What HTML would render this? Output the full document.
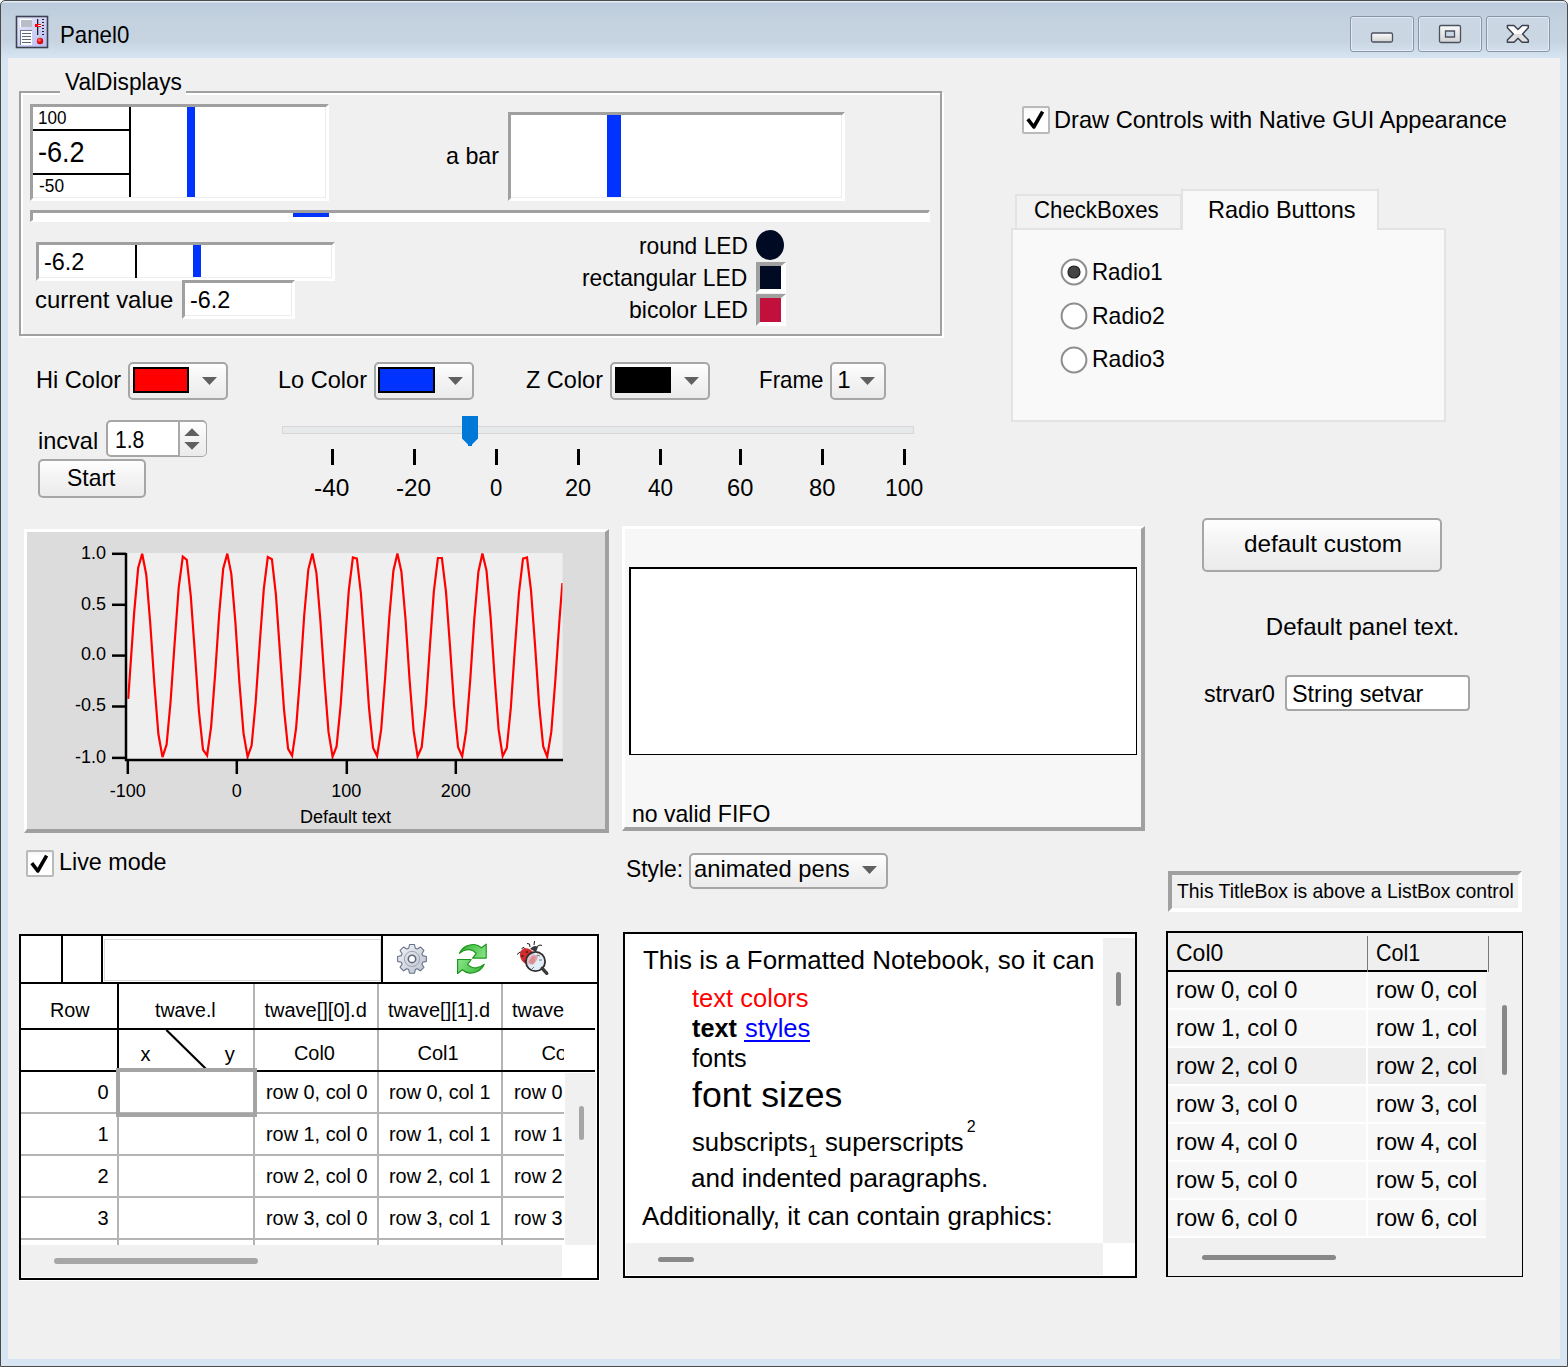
<!DOCTYPE html>
<html><head><meta charset="utf-8"><style>
html,body{margin:0;padding:0;width:1568px;height:1367px;overflow:hidden;background:#fff;}
body{position:relative;font-family:"Liberation Sans",sans-serif;}
.t{position:absolute;white-space:nowrap;}
</style></head><body>
<div style="position:absolute;left:0;top:0;width:1568px;height:1367px;box-sizing:border-box;border:1px solid #4a4a4a;border-radius:5px 5px 0 0;background:linear-gradient(#e4ecf5 0px,#e4ecf5 1px,#bccbdb 2px,#c4d2df 20px,#c6d4e1 40px,#d6e3f1 56px,#d8e5f3 70px,#d8e5f3 100%);"></div>
<div style="position:absolute;left:8px;top:58px;width:1552px;height:1301px;background:#f0f0f0;"></div>
<svg style="position:absolute;left:15px;top:15px" width="35" height="35" viewBox="15 15 35 35">
<defs><linearGradient id="ig" x1="0" y1="0" x2="1" y2="1"><stop offset="0" stop-color="#e8e8fc"/><stop offset="1" stop-color="#b8bdf0"/></linearGradient>
<radialGradient id="rb" cx="0.4" cy="0.35" r="0.7"><stop offset="0" stop-color="#ff8080"/><stop offset="0.5" stop-color="#f01010"/><stop offset="1" stop-color="#c00000"/></radialGradient></defs>
<rect x="16.5" y="16.5" width="31" height="31" fill="url(#ig)" stroke="#3c4250" stroke-width="1.6"/>
<rect x="20" y="19" width="12" height="8" fill="#fff"/><rect x="21" y="20" width="11" height="7" fill="#b8bec8"/>
<rect x="20" y="30" width="12" height="15" fill="#fff"/><rect x="20" y="30" width="1" height="15" fill="#6a7888"/><rect x="20" y="30" width="12" height="1" fill="#6a7888"/>
<g fill="#5a6878"><rect x="22" y="33" width="9" height="1"/><rect x="22" y="36" width="9" height="1"/><rect x="22" y="39" width="9" height="1"/><rect x="22" y="42" width="9" height="1"/></g>
<rect x="37" y="19" width="1.3" height="16" fill="#202428"/>
<rect x="35" y="24" width="6" height="3" fill="#ff0000"/><rect x="38" y="25" width="3" height="1" fill="#fff"/>
<g fill="#202428"><rect x="42" y="19" width="2" height="1"/><rect x="42" y="22" width="2" height="1"/><rect x="42" y="25" width="2" height="1"/><rect x="42" y="28" width="2" height="1"/><rect x="42" y="31" width="2" height="1"/><rect x="42" y="34" width="2" height="1"/></g>
<circle cx="40" cy="41" r="3.2" fill="url(#rb)"/>
</svg>
<div class="t" style="left:60.07px;top:22.70px;font-size:24px;line-height:24px;color:#000;font-weight:normal;font-family:'Liberation Sans';transform:scaleX(0.9266);transform-origin:0 0;">Panel0</div>
<div style="position:absolute;left:1350px;top:16px;width:64px;height:35.5px;box-sizing:border-box;border:1px solid #8894aa;border-radius:3px;box-shadow:inset 0 0 0 1px rgba(255,255,255,0.45);background:linear-gradient(rgba(255,255,255,0.12),rgba(255,255,255,0.05));"></div>
<div style="position:absolute;left:1418px;top:16px;width:64px;height:35.5px;box-sizing:border-box;border:1px solid #8894aa;border-radius:3px;box-shadow:inset 0 0 0 1px rgba(255,255,255,0.45);background:linear-gradient(rgba(255,255,255,0.12),rgba(255,255,255,0.05));"></div>
<div style="position:absolute;left:1486px;top:16px;width:64px;height:35.5px;box-sizing:border-box;border:1px solid #8894aa;border-radius:3px;box-shadow:inset 0 0 0 1px rgba(255,255,255,0.45);background:linear-gradient(rgba(255,255,255,0.12),rgba(255,255,255,0.05));"></div>
<svg style="position:absolute;left:1360px;top:20px" width="190" height="30" viewBox="1360 20 190 30">
<defs><linearGradient id="cg" x1="0" y1="0" x2="0" y2="1"><stop offset="0" stop-color="#fbfbfb"/><stop offset="1" stop-color="#d2d2d2"/></linearGradient><linearGradient id="cg2" x1="0" y1="0" x2="0" y2="1"><stop offset="0" stop-color="#fff"/><stop offset="0.5" stop-color="#fcfcfc"/><stop offset="0.5" stop-color="#dcdcdc"/><stop offset="1" stop-color="#e4e4e4"/></linearGradient></defs>
<rect x="1371.5" y="33" width="21" height="9" rx="1.5" fill="url(#cg)" stroke="#4a5060" stroke-width="1.3"/>
<path fill-rule="evenodd" d="M1441,25.5 h18 a1.5,1.5 0 0 1 1.5,1.5 v14 a1.5,1.5 0 0 1 -1.5,1.5 h-18 a1.5,1.5 0 0 1 -1.5,-1.5 v-14 a1.5,1.5 0 0 1 1.5,-1.5 z M1445.5,31 v6 h9 v-6 z" fill="url(#cg)" stroke="#4a5060" stroke-width="1.3"/>
<path d="M1507.4,25.5 H1514 L1518,29.5 L1522.1,25.5 H1528.3 V27.8 L1522.6,34 L1528.3,40 V42.3 H1522.1 L1518,38.3 L1514,42.3 H1507.4 V40 L1513.3,34 L1507.4,27.8 Z" fill="url(#cg2)" stroke="#3c4250" stroke-width="1.5" stroke-linejoin="round"/>
</svg>
<div style="position:absolute;left:21px;top:93px;width:923px;height:245px;box-sizing:border-box;border:2px solid #fff;"></div>
<div style="position:absolute;left:19px;top:91px;width:923px;height:245px;box-sizing:border-box;border:2px solid #a0a0a0;"></div>
<div style="position:absolute;left:60px;top:78px;width:126px;height:18px;background:#f0f0f0;"></div>
<div class="t" style="left:64.50px;top:70.54px;font-size:23px;line-height:23px;color:#000;font-weight:normal;font-family:'Liberation Sans';transform:scaleX(0.9869);transform-origin:0 0;">ValDisplays</div>
<div style="position:absolute;left:30px;top:104px;width:299px;height:97px;box-sizing:border-box;background:#fff;border-style:solid;border-width:3px;border-color:#a0a0a0 #fff #fff #a0a0a0;box-shadow:inset -1px -1px 0 #ededed;"></div>
<div style="position:absolute;left:129px;top:107px;width:2px;height:90px;background:#000;"></div>
<div style="position:absolute;left:33px;top:129px;width:97px;height:2px;background:#000;"></div>
<div style="position:absolute;left:33px;top:173px;width:97px;height:2px;background:#000;"></div>
<div style="position:absolute;left:187px;top:107px;width:8px;height:90px;background:#0033ff;"></div>
<div class="t" style="left:38.25px;top:108.77px;font-size:18px;line-height:18px;color:#000;font-weight:normal;font-family:'Liberation Sans';transform:scaleX(0.9476);transform-origin:0 0;">100</div>
<div class="t" style="left:38.27px;top:137.67px;font-size:29px;line-height:29px;color:#000;font-weight:normal;font-family:'Liberation Sans';transform:scaleX(0.9343);transform-origin:0 0;">-6.2</div>
<div class="t" style="left:39.20px;top:176.87px;font-size:18px;line-height:18px;color:#000;font-weight:normal;font-family:'Liberation Sans';transform:scaleX(0.9614);transform-origin:0 0;">-50</div>
<div style="position:absolute;left:30px;top:210px;width:900px;height:12px;box-sizing:border-box;background:#fff;border-style:solid;border-width:3px 2px 2px 3px;border-color:#a0a0a0 #fff #fff #a0a0a0;"></div>
<div style="position:absolute;left:293px;top:213px;width:36px;height:4px;background:#0033ff;"></div>
<div class="t" style="left:445.63px;top:144.30px;font-size:24px;line-height:24px;color:#000;font-weight:normal;font-family:'Liberation Sans';transform:scaleX(0.9700);transform-origin:0 0;">a bar</div>
<div style="position:absolute;left:508px;top:112px;width:337px;height:89px;box-sizing:border-box;background:#fff;border-style:solid;border-width:3px;border-color:#a0a0a0 #fff #fff #a0a0a0;box-shadow:inset -1px -1px 0 #ededed;"></div>
<div style="position:absolute;left:607px;top:115px;width:14px;height:82px;background:#0033ff;"></div>
<div class="t" style="left:638.65px;top:234.10px;font-size:24px;line-height:24px;color:#000;font-weight:normal;font-family:'Liberation Sans';transform:scaleX(0.9497);transform-origin:0 0;">round LED</div>
<div class="t" style="left:582.35px;top:266.20px;font-size:24px;line-height:24px;color:#000;font-weight:normal;font-family:'Liberation Sans';transform:scaleX(0.9530);transform-origin:0 0;">rectangular LED</div>
<div class="t" style="left:628.64px;top:297.60px;font-size:24px;line-height:24px;color:#000;font-weight:normal;font-family:'Liberation Sans';transform:scaleX(0.9591);transform-origin:0 0;">bicolor LED</div>
<div style="position:absolute;left:756px;top:230px;width:28px;height:30px;border-radius:50%;background:#000a22;"></div>
<div style="position:absolute;left:756px;top:262px;width:30px;height:31px;box-sizing:border-box;background:#000a22;border-style:solid;border-width:4px 5px 4px 4px;border-color:#a0a0a0 #fff #fff #a0a0a0;"></div>
<div style="position:absolute;left:756px;top:294px;width:30px;height:32px;box-sizing:border-box;background:#c2103c;border-style:solid;border-width:4px 5px 4px 4px;border-color:#a0a0a0 #fff #fff #a0a0a0;"></div>
<div style="position:absolute;left:36px;top:242px;width:299px;height:39px;box-sizing:border-box;background:#fff;border-style:solid;border-width:3px;border-color:#a0a0a0 #fff #fff #a0a0a0;box-shadow:inset -1px -1px 0 #ededed;"></div>
<div style="position:absolute;left:135px;top:245px;width:2px;height:33px;background:#000;"></div>
<div style="position:absolute;left:193px;top:245px;width:8px;height:32px;background:#0033ff;"></div>
<div class="t" style="left:43.92px;top:249.60px;font-size:24px;line-height:24px;color:#000;font-weight:normal;font-family:'Liberation Sans';transform:scaleX(0.9773);transform-origin:0 0;">-6.2</div>
<div class="t" style="left:35.40px;top:287.60px;font-size:24px;line-height:24px;color:#000;font-weight:normal;font-family:'Liberation Sans';transform:scaleX(0.9972);transform-origin:0 0;">current value</div>
<div style="position:absolute;left:182px;top:280px;width:113px;height:39px;box-sizing:border-box;background:#fff;border-style:solid;border-width:3px;border-color:#a0a0a0 #fff #fff #a0a0a0;box-shadow:inset -1px -1px 0 #ededed;"></div>
<div class="t" style="left:190.43px;top:287.60px;font-size:24px;line-height:24px;color:#000;font-weight:normal;font-family:'Liberation Sans';transform:scaleX(0.9723);transform-origin:0 0;">-6.2</div>
<div style="position:absolute;left:1022px;top:106px;width:27.5px;height:27.5px;box-sizing:border-box;border:2px solid #bababa;border-radius:2px;background:linear-gradient(#f4f4f4,#fff 4px);"></div><svg style="position:absolute;left:1022px;top:106px" width="28" height="28" viewBox="0 0 28 28"><path d="M5.8,13.2 L11.8,21 L20.6,5.6" fill="none" stroke="#000" stroke-width="3.6" stroke-linejoin="round"/></svg>
<div class="t" style="left:1053.72px;top:107.70px;font-size:24px;line-height:24px;color:#000;font-weight:normal;font-family:'Liberation Sans';transform:scaleX(0.9840);transform-origin:0 0;">Draw Controls with Native GUI Appearance</div>
<div style="position:absolute;left:1015px;top:194px;width:167px;height:36px;box-sizing:border-box;border:2px solid #e3e3e3;border-bottom:none;background:#f2f2f2;"></div>
<div style="position:absolute;left:1011px;top:228px;width:435px;height:194px;box-sizing:border-box;border:2px solid #e3e3e3;background:#f9f9f9;"></div>
<div style="position:absolute;left:1181px;top:189px;width:198px;height:41px;box-sizing:border-box;border:2px solid #e3e3e3;border-bottom:none;background:#f9f9f9;"></div>
<div class="t" style="left:1034.08px;top:197.60px;font-size:24px;line-height:24px;color:#000;font-weight:normal;font-family:'Liberation Sans';transform:scaleX(0.9250);transform-origin:0 0;">CheckBoxes</div>
<div class="t" style="left:1208.02px;top:197.60px;font-size:24px;line-height:24px;color:#000;font-weight:normal;font-family:'Liberation Sans';transform:scaleX(0.9789);transform-origin:0 0;">Radio Buttons</div>
<svg style="position:absolute;left:1059px;top:257px" width="30" height="30" viewBox="0 0 30 30"><circle cx="15" cy="15" r="12.4" fill="#fff" stroke="#8e8e8e" stroke-width="2"/><circle cx="15" cy="15" r="6" fill="#454545" stroke="#202020" stroke-width="1.2"/></svg>
<svg style="position:absolute;left:1059px;top:301px" width="30" height="30" viewBox="0 0 30 30"><circle cx="15" cy="15" r="12.4" fill="#fff" stroke="#8e8e8e" stroke-width="2"/></svg>
<svg style="position:absolute;left:1059px;top:345px" width="30" height="30" viewBox="0 0 30 30"><circle cx="15" cy="15" r="12.4" fill="#fff" stroke="#8e8e8e" stroke-width="2"/></svg>
<div class="t" style="left:1092.07px;top:259.80px;font-size:24px;line-height:24px;color:#000;font-weight:normal;font-family:'Liberation Sans';transform:scaleX(0.9303);transform-origin:0 0;">Radio1</div>
<div class="t" style="left:1092.34px;top:304.00px;font-size:24px;line-height:24px;color:#000;font-weight:normal;font-family:'Liberation Sans';transform:scaleX(0.9584);transform-origin:0 0;">Radio2</div>
<div class="t" style="left:1092.34px;top:347.40px;font-size:24px;line-height:24px;color:#000;font-weight:normal;font-family:'Liberation Sans';transform:scaleX(0.9584);transform-origin:0 0;">Radio3</div>
<div class="t" style="left:36.02px;top:367.70px;font-size:24px;line-height:24px;color:#000;font-weight:normal;font-family:'Liberation Sans';transform:scaleX(0.9826);transform-origin:0 0;">Hi Color</div>
<div style="position:absolute;left:128px;top:362px;width:100px;height:38px;box-sizing:border-box;border:2px solid #a6a6a6;border-radius:5px;background:linear-gradient(#fefefe,#f3f3f3 50%,#ebebeb);"></div>
<div style="position:absolute;left:133px;top:367px;width:56px;height:26px;box-sizing:border-box;border:2px solid #000;background:#ff0000;"></div>
<svg style="position:absolute;left:201.5px;top:377.0px" width="15" height="8" viewBox="0 0 15 8"><path d="M0,0 H15 L7.5,8 Z" fill="#606060"/></svg>
<div class="t" style="left:278.02px;top:367.70px;font-size:24px;line-height:24px;color:#000;font-weight:normal;font-family:'Liberation Sans';transform:scaleX(0.9808);transform-origin:0 0;">Lo Color</div>
<div style="position:absolute;left:374px;top:362px;width:100px;height:38px;box-sizing:border-box;border:2px solid #a6a6a6;border-radius:5px;background:linear-gradient(#fefefe,#f3f3f3 50%,#ebebeb);"></div>
<div style="position:absolute;left:378px;top:367px;width:57px;height:26px;box-sizing:border-box;border:2px solid #000;background:#0033ff;"></div>
<svg style="position:absolute;left:447.5px;top:377.0px" width="15" height="8" viewBox="0 0 15 8"><path d="M0,0 H15 L7.5,8 Z" fill="#606060"/></svg>
<div class="t" style="left:525.50px;top:367.70px;font-size:24px;line-height:24px;color:#000;font-weight:normal;font-family:'Liberation Sans';transform:scaleX(0.9786);transform-origin:0 0;">Z Color</div>
<div style="position:absolute;left:610px;top:362px;width:100px;height:38px;box-sizing:border-box;border:2px solid #a6a6a6;border-radius:5px;background:linear-gradient(#fefefe,#f3f3f3 50%,#ebebeb);"></div>
<div style="position:absolute;left:615px;top:367px;width:56px;height:26px;background:#000;"></div>
<svg style="position:absolute;left:683.5px;top:377.0px" width="15" height="8" viewBox="0 0 15 8"><path d="M0,0 H15 L7.5,8 Z" fill="#606060"/></svg>
<div class="t" style="left:758.77px;top:367.70px;font-size:24px;line-height:24px;color:#000;font-weight:normal;font-family:'Liberation Sans';transform:scaleX(0.9295);transform-origin:0 0;">Frame</div>
<div style="position:absolute;left:830px;top:362px;width:56px;height:38px;box-sizing:border-box;border:2px solid #a6a6a6;border-radius:5px;background:linear-gradient(#fefefe,#f3f3f3 50%,#ebebeb);"></div>
<div class="t" style="left:837.20px;top:367.70px;font-size:24px;line-height:24px;color:#000;font-weight:normal;font-family:'Liberation Sans';">1</div>
<svg style="position:absolute;left:859.5px;top:377.0px" width="15" height="8" viewBox="0 0 15 8"><path d="M0,0 H15 L7.5,8 Z" fill="#606060"/></svg>
<div style="position:absolute;left:106px;top:420px;width:101px;height:37px;box-sizing:border-box;border:2px solid #a6a6a6;border-radius:5px;background:#fff;overflow:hidden;"></div>
<div style="position:absolute;left:179px;top:421.5px;width:26.5px;height:34px;background:linear-gradient(#fefefe,#f3f3f3 50%,#ebebeb);border-radius:0 4px 4px 0;"></div>
<div style="position:absolute;left:177.5px;top:421px;width:2px;height:35px;background:#a9a9a9;"></div>
<svg style="position:absolute;left:184px;top:428px" width="16" height="22" viewBox="0 0 16 22"><path d="M0.3,8 H15.7 L8,0.2 Z M0.3,14 H15.7 L8,21.8 Z" fill="#606060"/></svg>
<div class="t" style="left:38.02px;top:428.50px;font-size:24px;line-height:24px;color:#000;font-weight:normal;font-family:'Liberation Sans';transform:scaleX(0.9809);transform-origin:0 0;">incval</div>
<div class="t" style="left:115.02px;top:427.50px;font-size:24px;line-height:24px;color:#000;font-weight:normal;font-family:'Liberation Sans';transform:scaleX(0.8777);transform-origin:0 0;">1.8</div>
<div style="position:absolute;left:38px;top:458.5px;width:108px;height:39px;box-sizing:border-box;border:2px solid #a6a6a6;border-radius:5px;background:linear-gradient(#fefefe,#f3f3f3 50%,#ebebeb);"></div>
<div class="t" style="left:67.44px;top:465.70px;font-size:24px;line-height:24px;color:#000;font-weight:normal;font-family:'Liberation Sans';transform:scaleX(0.9557);transform-origin:0 0;">Start</div>
<div style="position:absolute;left:282px;top:426px;width:632px;height:8px;box-sizing:border-box;border:1.5px solid #d6d6d6;background:#e7eaea;"></div>
<svg style="position:absolute;left:461px;top:415px" width="18" height="32" viewBox="461 415 18 32"><path d="M462,416 H478 V438.5 L472,444.5 V446 H468 V444.5 L462,438.5 Z" fill="#0078d7"/></svg>
<div style="position:absolute;left:330.5px;top:449px;width:3px;height:16px;background:#000;"></div>
<div class="t" style="left:313.98px;top:476.30px;font-size:24px;line-height:24px;color:#000;font-weight:normal;font-family:'Liberation Sans';transform:scaleX(1.0198);transform-origin:0 0;">-40</div>
<div style="position:absolute;left:412.5px;top:449px;width:3px;height:16px;background:#000;"></div>
<div class="t" style="left:396.14px;top:476.30px;font-size:24px;line-height:24px;color:#000;font-weight:normal;font-family:'Liberation Sans';transform:scaleX(1.0108);transform-origin:0 0;">-20</div>
<div style="position:absolute;left:494.5px;top:449px;width:3px;height:16px;background:#000;"></div>
<div class="t" style="left:490.00px;top:476.30px;font-size:24px;line-height:24px;color:#000;font-weight:normal;font-family:'Liberation Sans';transform:scaleX(0.9231);transform-origin:0 0;">0</div>
<div style="position:absolute;left:576.5px;top:449px;width:3px;height:16px;background:#000;"></div>
<div class="t" style="left:564.62px;top:476.30px;font-size:24px;line-height:24px;color:#000;font-weight:normal;font-family:'Liberation Sans';transform:scaleX(0.9784);transform-origin:0 0;">20</div>
<div style="position:absolute;left:658.5px;top:449px;width:3px;height:16px;background:#000;"></div>
<div class="t" style="left:647.65px;top:476.30px;font-size:24px;line-height:24px;color:#000;font-weight:normal;font-family:'Liberation Sans';transform:scaleX(0.9375);transform-origin:0 0;">40</div>
<div style="position:absolute;left:738.5px;top:449px;width:3px;height:16px;background:#000;"></div>
<div class="t" style="left:726.51px;top:476.30px;font-size:24px;line-height:24px;color:#000;font-weight:normal;font-family:'Liberation Sans';transform:scaleX(0.9863);transform-origin:0 0;">60</div>
<div style="position:absolute;left:820.5px;top:449px;width:3px;height:16px;background:#000;"></div>
<div class="t" style="left:808.51px;top:476.30px;font-size:24px;line-height:24px;color:#000;font-weight:normal;font-family:'Liberation Sans';transform:scaleX(0.9863);transform-origin:0 0;">80</div>
<div style="position:absolute;left:902.5px;top:449px;width:3px;height:16px;background:#000;"></div>
<div class="t" style="left:884.54px;top:476.30px;font-size:24px;line-height:24px;color:#000;font-weight:normal;font-family:'Liberation Sans';transform:scaleX(0.9562);transform-origin:0 0;">100</div>
<div style="position:absolute;left:24px;top:529px;width:585px;height:304px;box-sizing:border-box;background:#dcdcdc;border-style:solid;border-width:3px 4px 4px 3px;border-color:#fff #a0a0a0 #a0a0a0 #fff;"></div>
<svg style="position:absolute;left:0;top:0" width="1568" height="1367" viewBox="0 0 1568 1367"><rect x="126" y="553" width="436.5" height="207" fill="#efefef"/><defs><clipPath id="pc"><rect x="127.3" y="540" width="435.2" height="222"/></clipPath></defs><polyline clip-path="url(#pc)" points="128.2,698.8 130.1,671.5 134.2,612.1 138.2,567.7 142.2,553.7 146.3,575.0 150.3,624.2 154.4,684.2 158.4,734.3 162.5,757.1 166.6,744.6 170.6,701.3 174.7,642.1 178.7,587.5 182.8,556.5 186.8,559.8 190.8,596.3 194.9,653.2 198.9,711.0 203.0,749.5 207.1,755.5 211.1,726.8 215.2,673.4 219.2,613.8 223.2,568.6 227.3,553.6 231.3,573.9 235.4,622.4 239.4,682.5 243.5,733.1 247.6,756.9 251.6,745.5 255.6,703.0 259.7,644.0 263.8,588.9 267.8,557.0 271.9,559.2 275.9,594.7 279.9,651.4 284.0,709.4 288.1,748.8 292.1,755.8 296.1,728.1 300.2,675.2 304.2,615.5 308.3,569.6 312.4,553.5 316.4,572.8 320.4,620.7 324.5,680.6 328.5,731.9 332.6,756.7 336.6,746.4 340.7,704.6 344.8,645.8 348.8,590.4 352.9,557.5 356.9,558.6 360.9,593.3 365.0,649.5 369.0,707.8 373.1,748.0 377.1,756.1 381.2,729.4 385.2,677.0 389.3,617.2 393.4,570.7 397.4,553.5 401.4,571.7 405.5,618.9 409.5,678.8 413.6,730.7 417.6,756.4 421.7,747.2 425.8,706.2 429.8,647.7 433.8,591.8 437.9,558.0 441.9,558.0 446.0,591.8 450.1,647.6 454.1,706.2 458.1,747.2 462.2,756.4 466.2,730.7 470.3,678.9 474.3,618.9 478.4,571.7 482.4,553.5 486.5,570.6 490.6,617.2 494.6,677.0 498.6,729.4 502.7,756.1 506.8,748.0 510.8,707.9 514.8,649.5 518.9,593.3 523.0,558.6 527.0,557.5 531.0,590.3 535.1,645.8 539.1,704.6 543.2,746.4 547.2,756.7 551.3,731.9 555.3,680.7 559.4,620.7 562.4,583.0" fill="none" stroke="#ff0000" stroke-width="2.2" stroke-linejoin="miter"/><path d="M126,553 V761 M125,760 H563" stroke="#000" stroke-width="2.5" fill="none"/><path d="M112,553.8 H126" stroke="#000" stroke-width="2.5"/><path d="M112,604.8 H126" stroke="#000" stroke-width="2.5"/><path d="M112,655.6 H126" stroke="#000" stroke-width="2.5"/><path d="M112,706.5 H126" stroke="#000" stroke-width="2.5"/><path d="M112,757.9 H126" stroke="#000" stroke-width="2.5"/><path d="M127.8,760 V774" stroke="#000" stroke-width="2.5"/><path d="M236.8,760 V774" stroke="#000" stroke-width="2.5"/><path d="M346.8,760 V774" stroke="#000" stroke-width="2.5"/><path d="M455.8,760 V774" stroke="#000" stroke-width="2.5"/></svg>
<div class="t" style="left:80.99px;top:543.57px;font-size:18px;line-height:18px;color:#000;font-weight:normal;font-family:'Liberation Sans';">1.0</div>
<div class="t" style="left:80.99px;top:594.57px;font-size:18px;line-height:18px;color:#000;font-weight:normal;font-family:'Liberation Sans';">0.5</div>
<div class="t" style="left:80.99px;top:645.37px;font-size:18px;line-height:18px;color:#000;font-weight:normal;font-family:'Liberation Sans';">0.0</div>
<div class="t" style="left:74.99px;top:696.27px;font-size:18px;line-height:18px;color:#000;font-weight:normal;font-family:'Liberation Sans';">-0.5</div>
<div class="t" style="left:74.99px;top:747.67px;font-size:18px;line-height:18px;color:#000;font-weight:normal;font-family:'Liberation Sans';">-1.0</div>
<div class="t" style="left:109.79px;top:781.57px;font-size:18px;line-height:18px;color:#000;font-weight:normal;font-family:'Liberation Sans';">-100</div>
<div class="t" style="left:231.80px;top:781.57px;font-size:18px;line-height:18px;color:#000;font-weight:normal;font-family:'Liberation Sans';">0</div>
<div class="t" style="left:331.29px;top:781.57px;font-size:18px;line-height:18px;color:#000;font-weight:normal;font-family:'Liberation Sans';">100</div>
<div class="t" style="left:440.79px;top:781.57px;font-size:18px;line-height:18px;color:#000;font-weight:normal;font-family:'Liberation Sans';">200</div>
<div class="t" style="left:300.00px;top:807.77px;font-size:18px;line-height:18px;color:#000;font-weight:normal;font-family:'Liberation Sans';">Default text</div>
<div style="position:absolute;left:622px;top:526px;width:523px;height:305px;box-sizing:border-box;background:#f7f7f7;border-style:solid;border-width:3px 4px 4px 3px;border-color:#fff #a0a0a0 #a0a0a0 #fff;"></div>
<div style="position:absolute;left:629px;top:567px;width:508px;height:188px;box-sizing:border-box;border-style:solid;border-color:#000;border-width:2px 1.3px 1.3px 2px;background:#fff;"></div>
<div class="t" style="left:631.94px;top:801.50px;font-size:24px;line-height:24px;color:#000;font-weight:normal;font-family:'Liberation Sans';transform:scaleX(0.9601);transform-origin:0 0;">no valid FIFO</div>
<div class="t" style="left:625.85px;top:857.00px;font-size:24px;line-height:24px;color:#000;font-weight:normal;font-family:'Liberation Sans';transform:scaleX(0.9520);transform-origin:0 0;">Style:</div>
<div style="position:absolute;left:688.5px;top:852.5px;width:199px;height:36px;box-sizing:border-box;border:2px solid #a6a6a6;border-radius:5px;background:linear-gradient(#fefefe,#f3f3f3 50%,#ebebeb);"></div>
<div class="t" style="left:693.61px;top:857.00px;font-size:24px;line-height:24px;color:#000;font-weight:normal;font-family:'Liberation Sans';transform:scaleX(0.9889);transform-origin:0 0;">animated pens</div>
<svg style="position:absolute;left:861.5px;top:866.0px" width="15" height="8" viewBox="0 0 15 8"><path d="M0,0 H15 L7.5,8 Z" fill="#606060"/></svg>
<div style="position:absolute;left:1202px;top:518px;width:240px;height:54px;box-sizing:border-box;border:2px solid #a6a6a6;border-radius:5px;background:linear-gradient(#fefefe,#f3f3f3 50%,#ebebeb);"></div>
<div class="t" style="left:1243.69px;top:532.00px;font-size:24px;line-height:24px;color:#000;font-weight:normal;font-family:'Liberation Sans';transform:scaleX(1.0130);transform-origin:0 0;">default custom</div>
<div class="t" style="left:1265.80px;top:614.50px;font-size:24px;line-height:24px;color:#000;font-weight:normal;font-family:'Liberation Sans';">Default panel text.</div>
<div class="t" style="left:1204.10px;top:681.70px;font-size:24px;line-height:24px;color:#000;font-weight:normal;font-family:'Liberation Sans';transform:scaleX(0.9658);transform-origin:0 0;">strvar0</div>
<div style="position:absolute;left:1284.5px;top:674.5px;width:185px;height:36.5px;box-sizing:border-box;border:2px solid #a6a6a6;border-radius:4px;background:#fff;"></div>
<div class="t" style="left:1291.52px;top:681.70px;font-size:24px;line-height:24px;color:#000;font-weight:normal;font-family:'Liberation Sans';transform:scaleX(0.9751);transform-origin:0 0;">String setvar</div>
<div style="position:absolute;left:26.3px;top:849.8px;width:27.5px;height:27.5px;box-sizing:border-box;border:2px solid #bababa;border-radius:2px;background:linear-gradient(#f4f4f4,#fff 4px);"></div><svg style="position:absolute;left:26.3px;top:849.8px" width="28" height="28" viewBox="0 0 28 28"><path d="M5.8,13.2 L11.8,21 L20.6,5.6" fill="none" stroke="#000" stroke-width="3.6" stroke-linejoin="round"/></svg>
<div class="t" style="left:58.51px;top:851.12px;font-size:23.5px;line-height:23.5px;color:#000;font-weight:normal;font-family:'Liberation Sans';transform:scaleX(0.9920);transform-origin:0 0;">Live mode</div>
<div style="position:absolute;left:1168px;top:871px;width:354px;height:41px;box-sizing:border-box;background:#f0f0f0;border-style:solid;border-width:4px;border-color:#a0a0a0 #fff #fff #a0a0a0;box-shadow:inset -1px -1px 0 #ededed;"></div>
<div class="t" style="left:1177.00px;top:880.43px;font-size:21px;line-height:21px;color:#000;font-weight:normal;font-family:'Liberation Sans';transform:scaleX(0.9221);transform-origin:0 0;">This TitleBox is above a ListBox control</div>
<div style="position:absolute;left:19px;top:934px;width:580px;height:346px;box-sizing:border-box;border:2px solid #000;background:#fff;box-shadow:1px 1px 0 #fff;"></div>
<div style="position:absolute;left:61px;top:936px;width:2px;height:47px;background:#000;"></div>
<div style="position:absolute;left:101px;top:936px;width:2px;height:47px;background:#000;"></div>
<div style="position:absolute;left:104px;top:939px;width:277px;height:42px;box-sizing:border-box;border:1px solid #dadada;background:#fff;"></div>
<div style="position:absolute;left:381px;top:936px;width:2px;height:47px;background:#000;"></div>
<div style="position:absolute;left:21px;top:982px;width:576px;height:2px;background:#000;"></div>
<div style="position:absolute;left:253px;top:984px;width:2px;height:261px;background:#b4b4b4;"></div>
<div style="position:absolute;left:377px;top:984px;width:2px;height:261px;background:#b4b4b4;"></div>
<div style="position:absolute;left:501px;top:984px;width:2px;height:261px;background:#b4b4b4;"></div>
<div style="position:absolute;left:117px;top:984px;width:2px;height:87px;background:#000;"></div>
<div style="position:absolute;left:21px;top:1028px;width:574px;height:2px;background:#000;"></div>
<div style="position:absolute;left:21px;top:1070px;width:574px;height:2px;background:#000;"></div>
<div style="position:absolute;left:117px;top:1072px;width:2px;height:173px;background:#b4b4b4;"></div>
<div style="position:absolute;left:21px;top:1112px;width:543px;height:2px;background:#b4b4b4;"></div>
<div style="position:absolute;left:21px;top:1154px;width:543px;height:2px;background:#b4b4b4;"></div>
<div style="position:absolute;left:21px;top:1196px;width:543px;height:2px;background:#b4b4b4;"></div>
<div style="position:absolute;left:21px;top:1238px;width:543px;height:2px;background:#b4b4b4;"></div>
<svg style="position:absolute;left:0;top:0" width="1568" height="1367" viewBox="0 0 1568 1367"><path d="M166.4,1030 L205.6,1068.5" stroke="#000" stroke-width="2.2"/></svg>
<div style="position:absolute;left:115.5px;top:1068px;width:141.5px;height:48.5px;box-sizing:border-box;border:4px solid #a4a4a4;"></div>
<div class="t" style="left:49.61px;top:999.68px;font-size:20px;line-height:20px;color:#000;font-weight:normal;font-family:'Liberation Sans';transform:scaleX(0.9907);transform-origin:0 0;">Row</div>
<div class="t" style="left:154.90px;top:999.68px;font-size:20px;line-height:20px;color:#000;font-weight:normal;font-family:'Liberation Sans';transform:scaleX(0.9741);transform-origin:0 0;">twave.l</div>
<div class="t" style="left:264.50px;top:1000.48px;font-size:20px;line-height:20px;color:#000;font-weight:normal;font-family:'Liberation Sans';">twave[][0].d</div>
<div class="t" style="left:388.40px;top:1000.48px;font-size:20px;line-height:20px;color:#000;font-weight:normal;font-family:'Liberation Sans';transform:scaleX(0.9975);transform-origin:0 0;">twave[][1].d</div>
<div class="t" style="left:140.50px;top:1043.68px;font-size:20px;line-height:20px;color:#000;font-weight:normal;font-family:'Liberation Sans';">x</div>
<div class="t" style="left:224.70px;top:1043.68px;font-size:20px;line-height:20px;color:#000;font-weight:normal;font-family:'Liberation Sans';">y</div>
<div class="t" style="left:293.61px;top:1043.48px;font-size:20px;line-height:20px;color:#000;font-weight:normal;font-family:'Liberation Sans';transform:scaleX(0.9948);transform-origin:0 0;">Col0</div>
<div class="t" style="left:417.50px;top:1043.48px;font-size:20px;line-height:20px;color:#000;font-weight:normal;font-family:'Liberation Sans';">Col1</div>
<div class="t" style="left:97.40px;top:1081.88px;font-size:20px;line-height:20px;color:#000;font-weight:normal;font-family:'Liberation Sans';">0</div>
<div class="t" style="left:265.71px;top:1081.88px;font-size:20px;line-height:20px;color:#000;font-weight:normal;font-family:'Liberation Sans';transform:scaleX(0.9936);transform-origin:0 0;">row 0, col 0</div>
<div class="t" style="left:389.21px;top:1081.88px;font-size:20px;line-height:20px;color:#000;font-weight:normal;font-family:'Liberation Sans';transform:scaleX(0.9936);transform-origin:0 0;">row 0, col 1</div>
<div class="t" style="left:97.40px;top:1123.88px;font-size:20px;line-height:20px;color:#000;font-weight:normal;font-family:'Liberation Sans';">1</div>
<div class="t" style="left:265.71px;top:1123.88px;font-size:20px;line-height:20px;color:#000;font-weight:normal;font-family:'Liberation Sans';transform:scaleX(0.9936);transform-origin:0 0;">row 1, col 0</div>
<div class="t" style="left:389.21px;top:1123.88px;font-size:20px;line-height:20px;color:#000;font-weight:normal;font-family:'Liberation Sans';transform:scaleX(0.9936);transform-origin:0 0;">row 1, col 1</div>
<div class="t" style="left:97.40px;top:1165.88px;font-size:20px;line-height:20px;color:#000;font-weight:normal;font-family:'Liberation Sans';">2</div>
<div class="t" style="left:265.71px;top:1165.88px;font-size:20px;line-height:20px;color:#000;font-weight:normal;font-family:'Liberation Sans';transform:scaleX(0.9936);transform-origin:0 0;">row 2, col 0</div>
<div class="t" style="left:389.21px;top:1165.88px;font-size:20px;line-height:20px;color:#000;font-weight:normal;font-family:'Liberation Sans';transform:scaleX(0.9936);transform-origin:0 0;">row 2, col 1</div>
<div class="t" style="left:97.40px;top:1207.88px;font-size:20px;line-height:20px;color:#000;font-weight:normal;font-family:'Liberation Sans';">3</div>
<div class="t" style="left:265.71px;top:1207.88px;font-size:20px;line-height:20px;color:#000;font-weight:normal;font-family:'Liberation Sans';transform:scaleX(0.9936);transform-origin:0 0;">row 3, col 0</div>
<div class="t" style="left:389.21px;top:1207.88px;font-size:20px;line-height:20px;color:#000;font-weight:normal;font-family:'Liberation Sans';transform:scaleX(0.9936);transform-origin:0 0;">row 3, col 1</div>
<div style="position:absolute;left:0;top:0;width:1568px;height:1367px;clip-path:inset(984px 1004px 122px 503px);">
<div class="t" style="left:512.30px;top:1000.48px;font-size:20px;line-height:20px;color:#000;font-weight:normal;font-family:'Liberation Sans';transform:scaleX(0.9975);transform-origin:0 0;">twave[][2].d</div>
<div class="t" style="left:541.40px;top:1043.48px;font-size:20px;line-height:20px;color:#000;font-weight:normal;font-family:'Liberation Sans';">Col2</div>
<div class="t" style="left:513.51px;top:1081.88px;font-size:20px;line-height:20px;color:#000;font-weight:normal;font-family:'Liberation Sans';transform:scaleX(0.9936);transform-origin:0 0;">row 0, col 2</div>
<div class="t" style="left:513.51px;top:1123.88px;font-size:20px;line-height:20px;color:#000;font-weight:normal;font-family:'Liberation Sans';transform:scaleX(0.9936);transform-origin:0 0;">row 1, col 2</div>
<div class="t" style="left:513.51px;top:1165.88px;font-size:20px;line-height:20px;color:#000;font-weight:normal;font-family:'Liberation Sans';transform:scaleX(0.9936);transform-origin:0 0;">row 2, col 2</div>
<div class="t" style="left:513.51px;top:1207.88px;font-size:20px;line-height:20px;color:#000;font-weight:normal;font-family:'Liberation Sans';transform:scaleX(0.9936);transform-origin:0 0;">row 3, col 2</div>
</div>
<div style="position:absolute;left:565px;top:1073px;width:31px;height:172px;background:#f0f0f0;"></div>
<div style="position:absolute;left:578.5px;top:1106px;width:5px;height:34px;background:#a6a6a6;border-radius:3px;"></div>
<div style="position:absolute;left:21px;top:1245px;width:541px;height:32px;background:#f0f0f0;"></div>
<div style="position:absolute;left:54px;top:1258px;width:204px;height:6px;background:#a6a6a6;border-radius:3px;"></div>
<svg style="position:absolute;left:390px;top:938px" width="170" height="42" viewBox="390 938 170 42">
<defs>
<linearGradient id="gg" x1="0" y1="0" x2="1" y2="1"><stop offset="0" stop-color="#f4f5f8"/><stop offset="1" stop-color="#b9bfcb"/></linearGradient>
<linearGradient id="gr1" gradientUnits="userSpaceOnUse" x1="462" y1="945" x2="486" y2="958"><stop offset="0" stop-color="#38b838"/><stop offset="1" stop-color="#88e488"/></linearGradient><linearGradient id="gr2" gradientUnits="userSpaceOnUse" x1="458" y1="960" x2="482" y2="973"><stop offset="0" stop-color="#88e488"/><stop offset="1" stop-color="#38b838"/></linearGradient>
<radialGradient id="mg" cx="0.4" cy="0.4" r="0.6"><stop offset="0" stop-color="#e4eef8"/><stop offset="1" stop-color="#b8cde0"/></radialGradient>
</defs>
<path d="M408.69,948.20 L409.53,944.51 L414.47,944.51 L415.31,948.20 L417.23,948.99 L420.43,946.98 L423.92,950.47 L421.91,953.67 L422.70,955.59 L426.39,956.43 L426.39,961.37 L422.70,962.21 L421.91,964.13 L423.92,967.33 L420.43,970.82 L417.23,968.81 L415.31,969.60 L414.47,973.29 L409.53,973.29 L408.69,969.60 L406.77,968.81 L403.57,970.82 L400.08,967.33 L402.09,964.13 L401.30,962.21 L397.61,961.37 L397.61,956.43 L401.30,955.59 L402.09,953.67 L400.08,950.47 L403.57,946.98 L406.77,948.99 Z" fill="url(#gg)" stroke="#66728a" stroke-width="1.1" stroke-linejoin="round"/>
<circle cx="412" cy="958.9" r="7.6" fill="none" stroke="#9aa3b3" stroke-width="1"/>
<circle cx="412" cy="958.9" r="3.7" fill="#fff" stroke="#5f6a7c" stroke-width="1.6"/>
<path d="M459.5,953.3 C463,946 470,944.3 474,944.5 C477,944.7 479.5,946 481.5,947.8 L486.2,944.2 L486.2,958.1 L472.6,958.1 L476.2,953.3 C473.5,950.5 470.5,949.5 467.6,949.7 C464,950 461.5,951.5 459.5,953.3 Z" fill="url(#gr1)" stroke="#1e961e" stroke-width="1.2" stroke-linejoin="round"/>
<path d="M484.3,964.3 C480.8,971.6 473.8,973.3 469.8,973.1 C466.8,972.9 464.3,971.6 462.3,969.8 L457.6,973.4 L457.6,959.5 L471.2,959.5 L467.6,964.3 C470.3,967.1 473.3,968.1 476.2,967.9 C479.8,967.6 482.3,966.1 484.3,964.3 Z" fill="url(#gr2)" stroke="#1e961e" stroke-width="1.2" stroke-linejoin="round"/>
<g stroke="#1a1a1a" stroke-width="1" fill="none"><path d="M523,953 l-3,-1 l-3,2.5 M526,950 l-2,-2.5 l-2.5,1 M530,947 l-0.5,-3 l-2.5,-0.5 M534,945 l0.5,-4 M537,946.5 l3,-1.5 l2,0.5"/></g>
<ellipse cx="527.5" cy="956.5" rx="7" ry="8.8" fill="#d42a2a" transform="rotate(-35 527.5 956.5)"/>
<path d="M530,949 q4,-5 8,-2 l-2,5 z" fill="#3a3a3a"/>
<circle cx="522.5" cy="956" r="1" fill="#222"/><circle cx="525.5" cy="961" r="1" fill="#222"/><circle cx="527" cy="952" r="0.9" fill="#222"/>
<circle cx="535.5" cy="961.5" r="9.6" fill="#dce8f6" fill-opacity="0.8" stroke="#2e2e2e" stroke-width="1.8"/>
<path d="M528.5,962 q3,-8 9,-7 q1,5 -5,10 z" fill="#d86060" opacity="0.55"/>
<path d="M537,955 l3,1 M539,960 l3,0 M534,967 l-2,2" stroke="#555" stroke-width="0.8" fill="none"/>
<path d="M542.2,968.3 L546.8,973.3" stroke="#3a3a3a" stroke-width="3.4" stroke-linecap="round"/>
</svg>
<div style="position:absolute;left:623px;top:932px;width:514px;height:346px;box-sizing:border-box;border:2px solid #000;background:#fff;"></div>
<div style="position:absolute;left:1103px;top:938px;width:32px;height:305px;background:#f0f0f0;"></div>
<div style="position:absolute;left:1116px;top:972px;width:5px;height:34px;background:#8a8a8a;border-radius:3px;"></div>
<div style="position:absolute;left:626px;top:1243px;width:477px;height:32px;background:#f0f0f0;"></div>
<div style="position:absolute;left:658px;top:1257px;width:36px;height:5px;background:#8a8a8a;border-radius:3px;"></div>
<div class="t" style="left:643.10px;top:947.00px;font-size:26px;line-height:26px;color:#000;font-weight:normal;font-family:'Liberation Sans';transform:scaleX(0.9979);transform-origin:0 0;">This is a Formatted Notebook, so it can</div>
<div class="t" style="left:692.20px;top:985.40px;font-size:26px;line-height:26px;color:#ff0000;font-weight:normal;font-family:'Liberation Sans';transform:scaleX(0.9824);transform-origin:0 0;">text colors</div>
<div class="t" style="left:692.40px;top:1014.80px;font-size:26px;line-height:26px;color:#000;font-weight:bold;font-family:'Liberation Sans';transform:scaleX(0.9683);transform-origin:0 0;">text</div>
<div class="t" style="left:744.50px;top:1014.50px;font-size:26px;line-height:26px;color:#0000ff;font-weight:normal;font-family:'Liberation Sans';transform:scaleX(0.9825);transform-origin:0 0;">styles</div>
<div style="position:absolute;left:744px;top:1039.5px;width:66px;height:2px;background:#0000ff;"></div>
<div class="t" style="left:692.20px;top:1044.80px;font-size:26px;line-height:26px;color:#000;font-weight:normal;font-family:'Liberation Sans';transform:scaleX(0.9704);transform-origin:0 0;">fonts</div>
<div class="t" style="left:692.20px;top:1077.19px;font-size:35px;line-height:35px;color:#000;font-weight:normal;font-family:'Liberation Sans';transform:scaleX(1.0173);transform-origin:0 0;">font sizes</div>
<div class="t" style="left:691.80px;top:1128.70px;font-size:26px;line-height:26px;color:#000;font-weight:normal;font-family:'Liberation Sans';transform:scaleX(0.9894);transform-origin:0 0;">subscripts</div>
<div class="t" style="left:808.60px;top:1143.66px;font-size:16px;line-height:16px;color:#000;font-weight:normal;font-family:'Liberation Sans';">1</div>
<div class="t" style="left:825.30px;top:1128.60px;font-size:26px;line-height:26px;color:#000;font-weight:normal;font-family:'Liberation Sans';transform:scaleX(0.9896);transform-origin:0 0;">superscripts</div>
<div class="t" style="left:966.80px;top:1118.96px;font-size:16px;line-height:16px;color:#000;font-weight:normal;font-family:'Liberation Sans';">2</div>
<div class="t" style="left:690.80px;top:1165.00px;font-size:26px;line-height:26px;color:#000;font-weight:normal;font-family:'Liberation Sans';transform:scaleX(1.0030);transform-origin:0 0;">and indented paragraphs.</div>
<div class="t" style="left:642.30px;top:1202.58px;font-size:26.5px;line-height:26.5px;color:#000;font-weight:normal;font-family:'Liberation Sans';transform:scaleX(0.9797);transform-origin:0 0;">Additionally, it can contain graphics:</div>
<div style="position:absolute;left:1166px;top:931px;width:357px;height:345.5px;box-sizing:border-box;border-style:solid;border-color:#000;border-width:2px 1.5px 1.5px 2px;background:#f0f0f0;"></div>
<div style="position:absolute;left:1168px;top:933px;width:320px;height:37px;background:#efefef;"></div>
<div style="position:absolute;left:1168px;top:970px;width:319px;height:2px;background:#000;"></div>
<div style="position:absolute;left:1366.5px;top:936px;width:1px;height:36px;background:#7a7a7a;"></div>
<div style="position:absolute;left:1487.5px;top:936px;width:1px;height:36px;background:#7a7a7a;"></div>
<div class="t" style="left:1176.04px;top:940.70px;font-size:24px;line-height:24px;color:#000;font-weight:normal;font-family:'Liberation Sans';transform:scaleX(0.9581);transform-origin:0 0;">Col0</div>
<div class="t" style="left:1376.10px;top:940.70px;font-size:24px;line-height:24px;color:#000;font-weight:normal;font-family:'Liberation Sans';transform:scaleX(0.8956);transform-origin:0 0;">Col1</div>
<div style="position:absolute;left:1168px;top:972px;width:318px;height:38px;background:#fff;"></div>
<div style="position:absolute;left:1168px;top:972px;width:198px;height:36px;background:#f7f7f7;"></div>
<div style="position:absolute;left:1368px;top:972px;width:118px;height:36px;background:#f7f7f7;"></div>
<div class="t" style="left:1176.01px;top:978.20px;font-size:24px;line-height:24px;color:#000;font-weight:normal;font-family:'Liberation Sans';transform:scaleX(0.9904);transform-origin:0 0;">row 0, col 0</div>
<div class="t" style="left:1376.31px;top:978.20px;font-size:24px;line-height:24px;color:#000;font-weight:normal;font-family:'Liberation Sans';transform:scaleX(0.9863);transform-origin:0 0;">row 0, col</div>
<div style="position:absolute;left:1168px;top:1010px;width:318px;height:38px;background:#fff;"></div>
<div style="position:absolute;left:1168px;top:1010px;width:198px;height:36px;background:#f7f7f7;"></div>
<div style="position:absolute;left:1368px;top:1010px;width:118px;height:36px;background:#f7f7f7;"></div>
<div class="t" style="left:1176.01px;top:1016.20px;font-size:24px;line-height:24px;color:#000;font-weight:normal;font-family:'Liberation Sans';transform:scaleX(0.9904);transform-origin:0 0;">row 1, col 0</div>
<div class="t" style="left:1376.31px;top:1016.20px;font-size:24px;line-height:24px;color:#000;font-weight:normal;font-family:'Liberation Sans';transform:scaleX(0.9863);transform-origin:0 0;">row 1, col</div>
<div style="position:absolute;left:1168px;top:1048px;width:318px;height:38px;background:#fff;"></div>
<div style="position:absolute;left:1168px;top:1048px;width:198px;height:36px;background:#efefef;"></div>
<div style="position:absolute;left:1368px;top:1048px;width:118px;height:36px;background:#efefef;"></div>
<div class="t" style="left:1176.01px;top:1054.20px;font-size:24px;line-height:24px;color:#000;font-weight:normal;font-family:'Liberation Sans';transform:scaleX(0.9904);transform-origin:0 0;">row 2, col 0</div>
<div class="t" style="left:1376.31px;top:1054.20px;font-size:24px;line-height:24px;color:#000;font-weight:normal;font-family:'Liberation Sans';transform:scaleX(0.9863);transform-origin:0 0;">row 2, col</div>
<div style="position:absolute;left:1168px;top:1086px;width:318px;height:38px;background:#fff;"></div>
<div style="position:absolute;left:1168px;top:1086px;width:198px;height:36px;background:#f7f7f7;"></div>
<div style="position:absolute;left:1368px;top:1086px;width:118px;height:36px;background:#f7f7f7;"></div>
<div class="t" style="left:1176.01px;top:1092.20px;font-size:24px;line-height:24px;color:#000;font-weight:normal;font-family:'Liberation Sans';transform:scaleX(0.9904);transform-origin:0 0;">row 3, col 0</div>
<div class="t" style="left:1376.31px;top:1092.20px;font-size:24px;line-height:24px;color:#000;font-weight:normal;font-family:'Liberation Sans';transform:scaleX(0.9863);transform-origin:0 0;">row 3, col</div>
<div style="position:absolute;left:1168px;top:1124px;width:318px;height:38px;background:#fff;"></div>
<div style="position:absolute;left:1168px;top:1124px;width:198px;height:36px;background:#f7f7f7;"></div>
<div style="position:absolute;left:1368px;top:1124px;width:118px;height:36px;background:#f7f7f7;"></div>
<div class="t" style="left:1176.01px;top:1130.20px;font-size:24px;line-height:24px;color:#000;font-weight:normal;font-family:'Liberation Sans';transform:scaleX(0.9904);transform-origin:0 0;">row 4, col 0</div>
<div class="t" style="left:1376.31px;top:1130.20px;font-size:24px;line-height:24px;color:#000;font-weight:normal;font-family:'Liberation Sans';transform:scaleX(0.9863);transform-origin:0 0;">row 4, col</div>
<div style="position:absolute;left:1168px;top:1162px;width:318px;height:38px;background:#fff;"></div>
<div style="position:absolute;left:1168px;top:1162px;width:198px;height:36px;background:#f7f7f7;"></div>
<div style="position:absolute;left:1368px;top:1162px;width:118px;height:36px;background:#f7f7f7;"></div>
<div class="t" style="left:1176.01px;top:1168.20px;font-size:24px;line-height:24px;color:#000;font-weight:normal;font-family:'Liberation Sans';transform:scaleX(0.9904);transform-origin:0 0;">row 5, col 0</div>
<div class="t" style="left:1376.31px;top:1168.20px;font-size:24px;line-height:24px;color:#000;font-weight:normal;font-family:'Liberation Sans';transform:scaleX(0.9863);transform-origin:0 0;">row 5, col</div>
<div style="position:absolute;left:1168px;top:1200px;width:318px;height:38px;background:#fff;"></div>
<div style="position:absolute;left:1168px;top:1200px;width:198px;height:36px;background:#f7f7f7;"></div>
<div style="position:absolute;left:1368px;top:1200px;width:118px;height:36px;background:#f7f7f7;"></div>
<div class="t" style="left:1176.01px;top:1206.20px;font-size:24px;line-height:24px;color:#000;font-weight:normal;font-family:'Liberation Sans';transform:scaleX(0.9904);transform-origin:0 0;">row 6, col 0</div>
<div class="t" style="left:1376.31px;top:1206.20px;font-size:24px;line-height:24px;color:#000;font-weight:normal;font-family:'Liberation Sans';transform:scaleX(0.9863);transform-origin:0 0;">row 6, col</div>
<div style="position:absolute;left:1502px;top:1005px;width:5px;height:70px;background:#888;border-radius:3px;"></div>
<div style="position:absolute;left:1202px;top:1255px;width:134px;height:5px;background:#888;border-radius:3px;"></div>
</body></html>
